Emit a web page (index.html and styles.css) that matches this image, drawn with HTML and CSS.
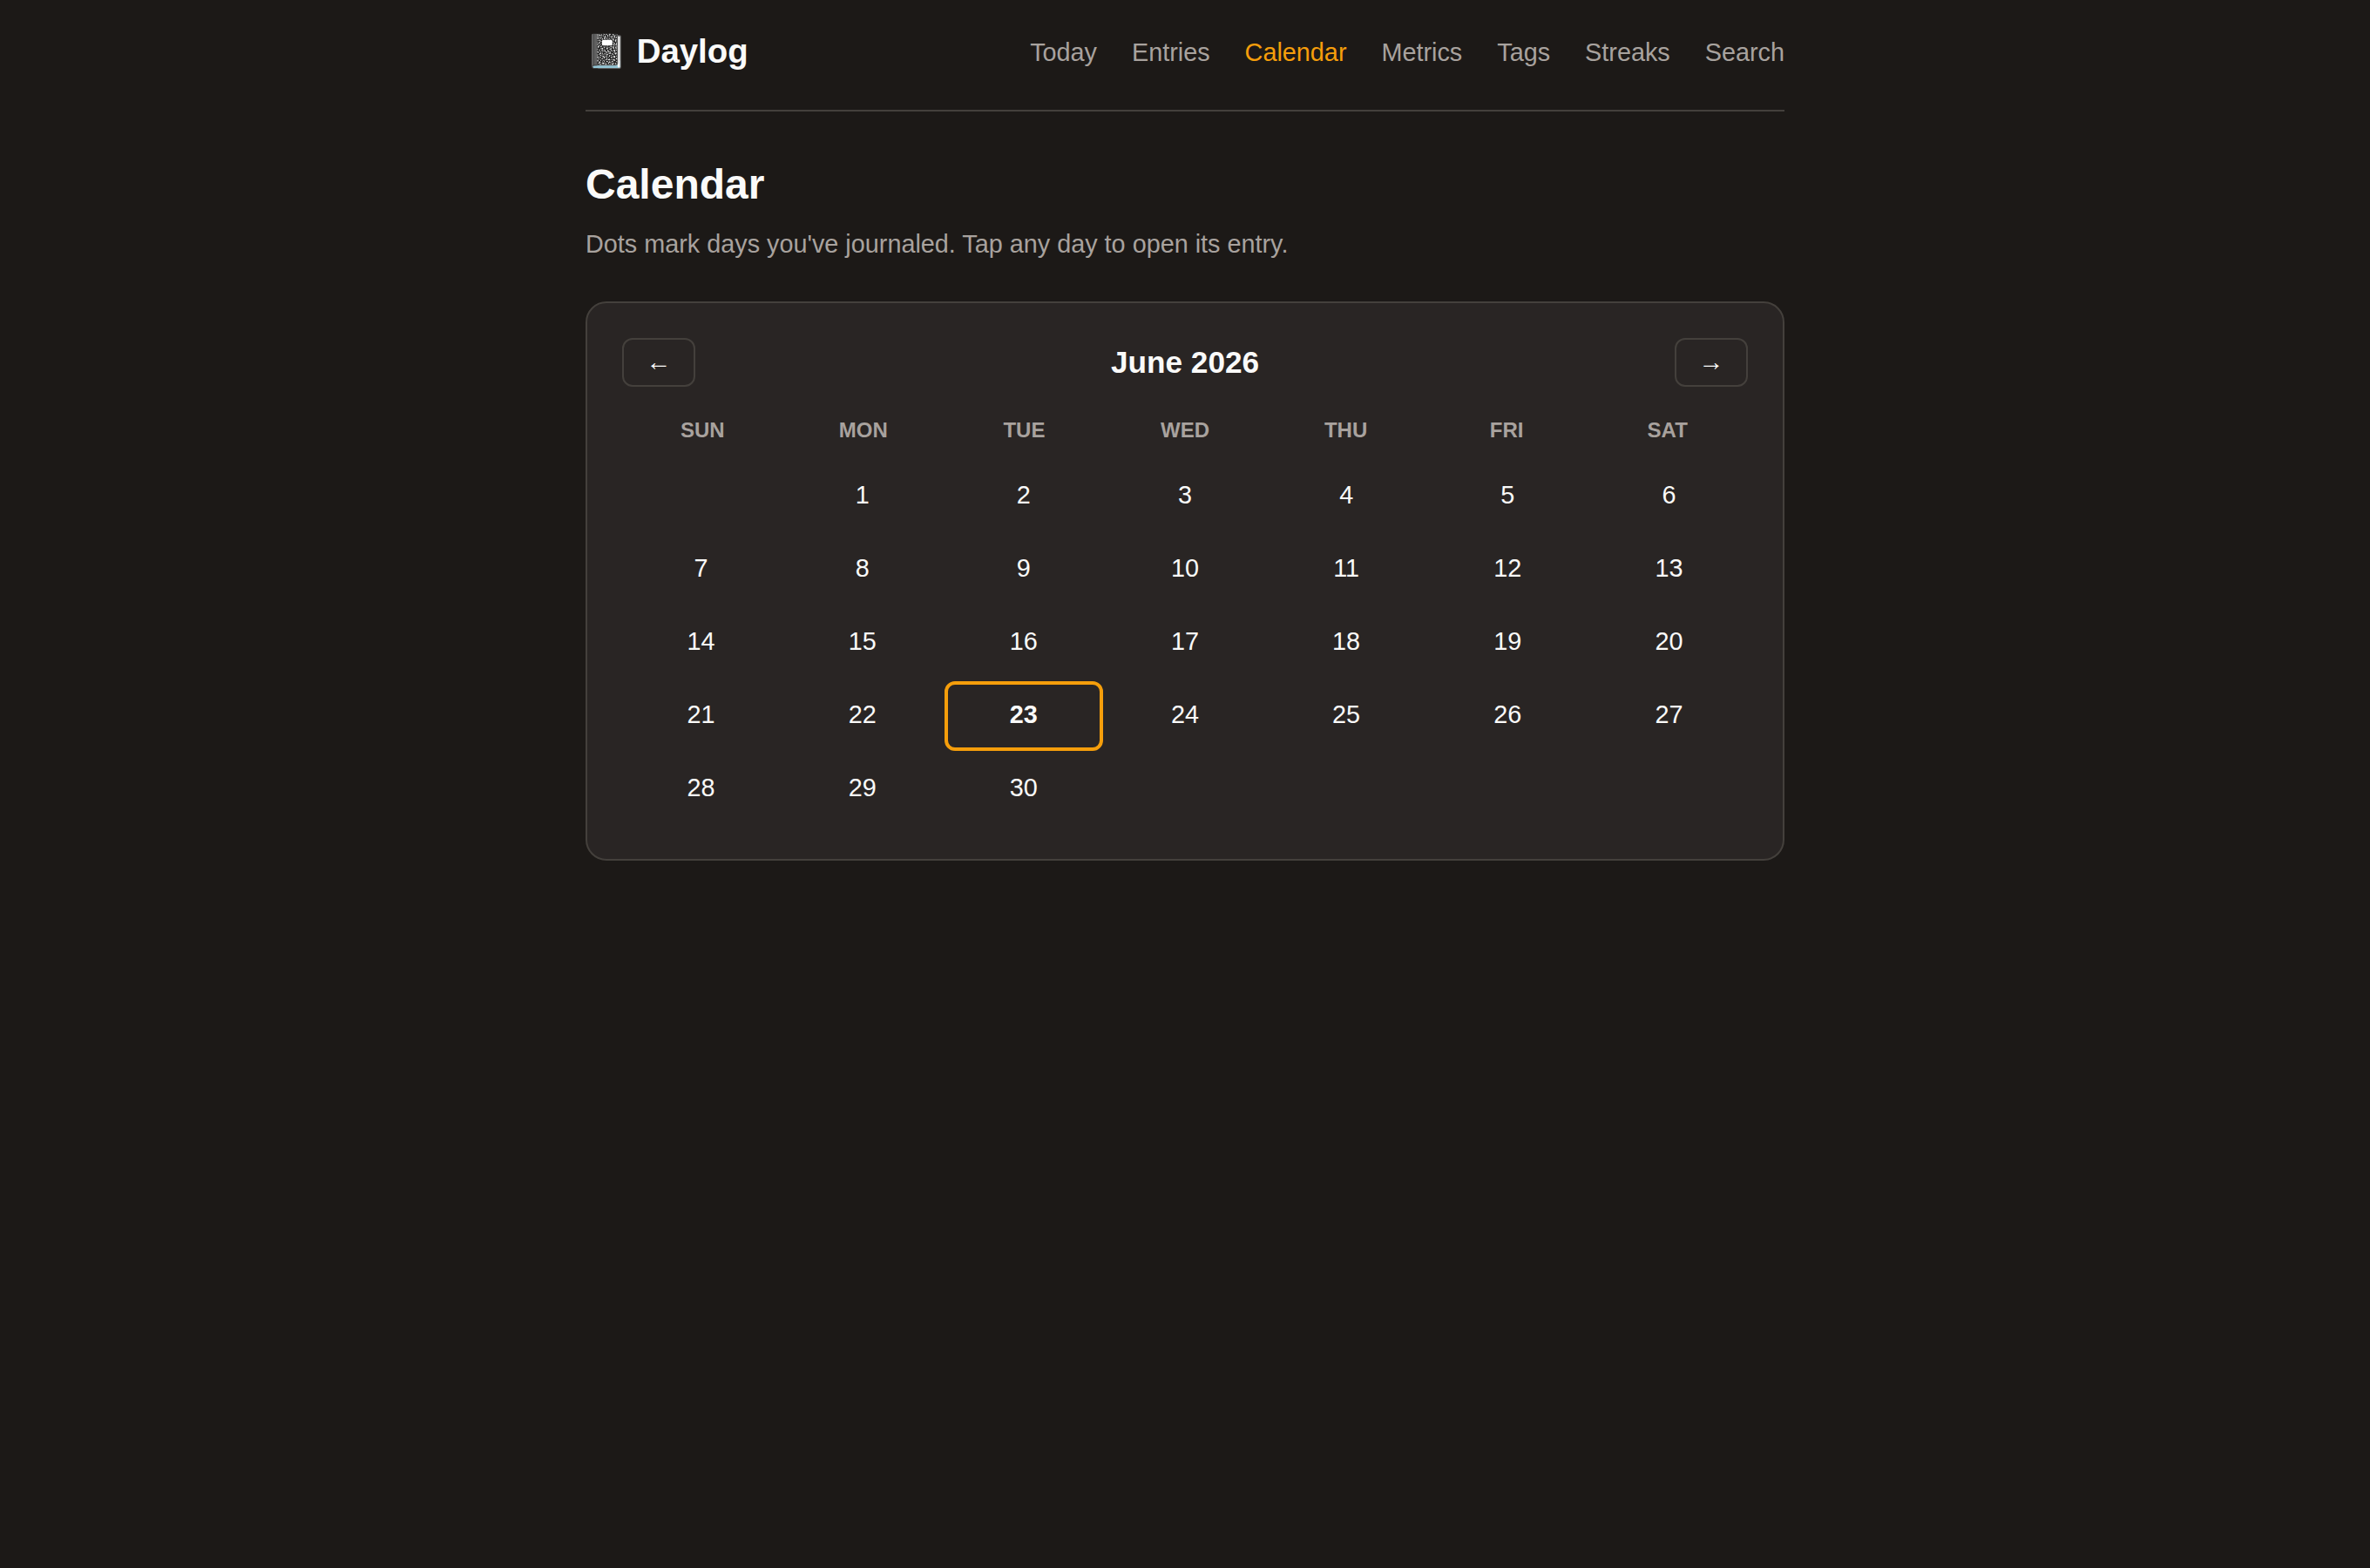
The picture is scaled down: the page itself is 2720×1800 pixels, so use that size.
FILE: index.html
```html
<!DOCTYPE html>
<html lang="en">
<head>
<meta charset="UTF-8">
<meta name="viewport" content="width=device-width, initial-scale=1.0">
<title>Daylog - Calendar</title>
<link rel="stylesheet" href="styles.css">
</head>
<body>

<div class="container">
    <header class="site-header">
        <a class="brand" href="#">📓 Daylog</a>
        <nav class="site-nav">
            <a href="#">Today</a>
            <a href="#">Entries</a>
            <a href="#" class="active">Calendar</a>
            <a href="#">Metrics</a>
            <a href="#">Tags</a>
            <a href="#">Streaks</a>
            <a href="#">Search</a>
        </nav>
    </header>

    <main>
        <h1>Calendar</h1>
        <p class="subtitle">Dots mark days you've journaled. Tap any day to open its entry.</p>

        <section class="card">
            <div class="month-bar">
                <button class="month-btn" aria-label="Previous month">←</button>
                <h2>June 2026</h2>
                <button class="month-btn" aria-label="Next month">→</button>
            </div>
            <div class="weekdays">
                <span>SUN</span>
                <span>MON</span>
                <span>TUE</span>
                <span>WED</span>
                <span>THU</span>
                <span>FRI</span>
                <span>SAT</span>
            </div>
            <div class="days">
                <span class="day"></span>
                <a class="day" href="#">1</a>
                <a class="day" href="#">2</a>
                <a class="day" href="#">3</a>
                <a class="day" href="#">4</a>
                <a class="day" href="#">5</a>
                <a class="day" href="#">6</a>
                <a class="day" href="#">7</a>
                <a class="day" href="#">8</a>
                <a class="day" href="#">9</a>
                <a class="day" href="#">10</a>
                <a class="day" href="#">11</a>
                <a class="day" href="#">12</a>
                <a class="day" href="#">13</a>
                <a class="day" href="#">14</a>
                <a class="day" href="#">15</a>
                <a class="day" href="#">16</a>
                <a class="day" href="#">17</a>
                <a class="day" href="#">18</a>
                <a class="day" href="#">19</a>
                <a class="day" href="#">20</a>
                <a class="day" href="#">21</a>
                <a class="day" href="#">22</a>
                <a class="day today" href="#">23</a>
                <a class="day" href="#">24</a>
                <a class="day" href="#">25</a>
                <a class="day" href="#">26</a>
                <a class="day" href="#">27</a>
                <a class="day" href="#">28</a>
                <a class="day" href="#">29</a>
                <a class="day" href="#">30</a>
            </div>
        </section>
    </main>
</div>

</body>
</html>
```
FILE: styles.css
```css
* {
    box-sizing: border-box;
}
body {
    margin: 0;
    background-color: #1c1917;
    color: #fafaf9;
    font-family: "Liberation Sans", Arial, sans-serif;
    font-size: 28.8px;
}
a {
    color: inherit;
    text-decoration: none;
}
.container {
    width: 1376px;
    margin: 0 auto;
}
.site-header {
    display: flex;
    justify-content: space-between;
    align-items: center;
    height: 128px;
    padding-bottom: 8px;
    border-bottom: 2px solid #44403c;
}
.brand {
    padding-bottom: 2px;
    font-size: 38.4px;
    font-weight: bold;
}
.site-nav {
    display: flex;
    gap: 40px;
    padding-top: 2px;
    color: #a8a29e;
}
.site-nav .active {
    color: #f59e0b;
}
h1 {
    margin: 56px 0 16px;
    font-size: 48px;
    line-height: 56px;
}
.subtitle {
    margin: 0 0 42px;
    color: #a8a29e;
    line-height: 48px;
}
.card {
    padding: 40px;
    background-color: #292524;
    border: 2px solid #44403c;
    border-radius: 24px;
}
.month-bar {
    display: flex;
    justify-content: space-between;
    align-items: center;
    height: 56px;
    margin-bottom: 24px;
}
.month-bar h2 {
    margin: 0;
    font-size: 35.2px;
}
.month-btn {
    width: 84px;
    height: 56px;
    padding: 0 0 2px;
    background: none;
    border: 2px solid #44403c;
    border-radius: 12px;
    color: #fafaf9;
    font-family: inherit;
    font-size: 28.8px;
}
.weekdays {
    display: grid;
    grid-template-columns: repeat(7, 1fr);
    height: 62px;
    padding-top: 12px;
    color: #a8a29e;
    font-size: 24px;
    font-weight: bold;
    text-align: center;
}
.days {
    display: grid;
    grid-template-columns: repeat(7, 1fr);
    grid-auto-rows: 80px;
    gap: 4px;
}
.day {
    display: flex;
    justify-content: center;
    align-items: center;
    padding-bottom: 4px;
    border: 4px solid transparent;
    border-radius: 12px;
}
.today {
    margin-right: -1px;
    padding-right: 1px;
    border-color: #f59e0b;
    font-weight: bold;
}
```
